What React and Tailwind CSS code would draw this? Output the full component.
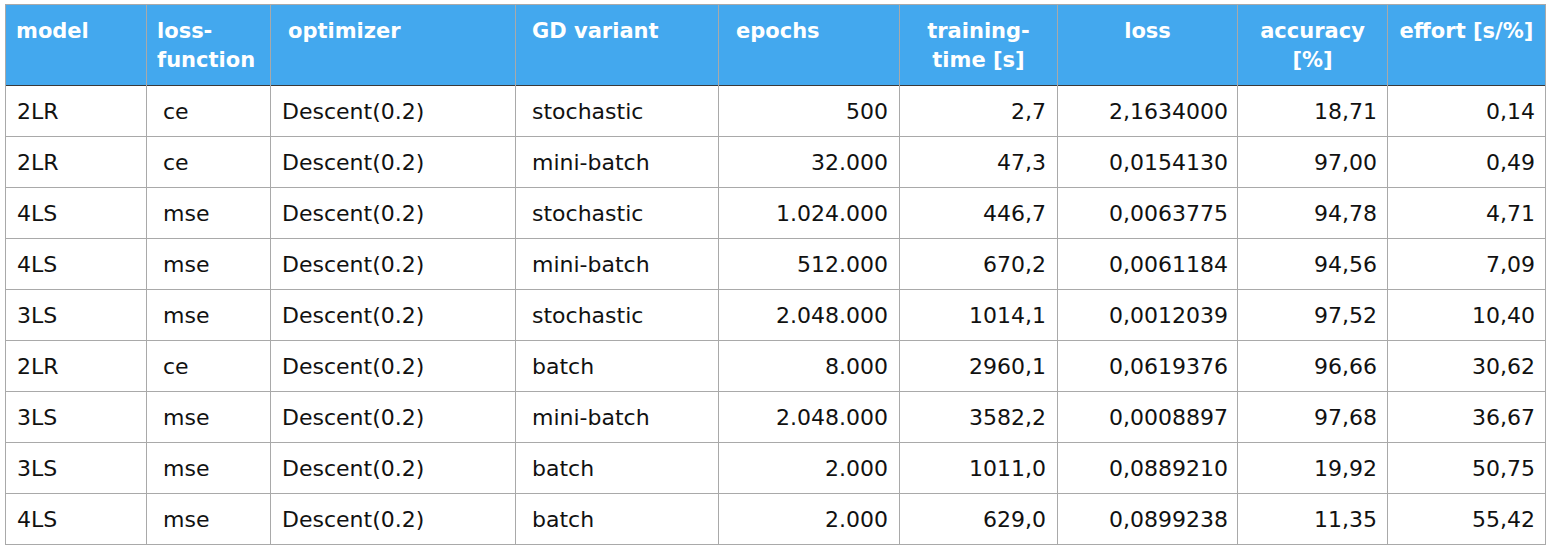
import React from "react";

const COLS = [
  { label: ["model"], w: 141, head: "text-left pl-[10px]", body: "text-left pl-[11px]" },
  { label: ["loss-", "function"], w: 124, head: "text-left pl-[10px]", body: "text-left pl-[16px]" },
  { label: ["optimizer"], w: 245, head: "text-left pl-[17px]", body: "text-left pl-[11px]" },
  { label: ["GD variant"], w: 203, head: "text-left pl-[16px]", body: "text-left pl-[16px]" },
  { label: ["epochs"], w: 181, head: "text-left pl-[17px]", body: "text-right pr-[11px]" },
  { label: ["training-", "time [s]"], w: 158, head: "text-center", body: "text-right pr-[11px]" },
  { label: ["loss"], w: 180, head: "text-center", body: "text-right pr-[9px]" },
  { label: ["accuracy", "[%]"], w: 150, head: "text-center", body: "text-right pr-[10px]" },
  { label: ["effort [s/%]"], w: 158, head: "text-center", body: "text-right pr-[10px]" },
];

const ROWS = [
  ["2LR", "ce", "Descent(0.2)", "stochastic", "500", "2,7", "2,1634000", "18,71", "0,14"],
  ["2LR", "ce", "Descent(0.2)", "mini-batch", "32.000", "47,3", "0,0154130", "97,00", "0,49"],
  ["4LS", "mse", "Descent(0.2)", "stochastic", "1.024.000", "446,7", "0,0063775", "94,78", "4,71"],
  ["4LS", "mse", "Descent(0.2)", "mini-batch", "512.000", "670,2", "0,0061184", "94,56", "7,09"],
  ["3LS", "mse", "Descent(0.2)", "stochastic", "2.048.000", "1014,1", "0,0012039", "97,52", "10,40"],
  ["2LR", "ce", "Descent(0.2)", "batch", "8.000", "2960,1", "0,0619376", "96,66", "30,62"],
  ["3LS", "mse", "Descent(0.2)", "mini-batch", "2.048.000", "3582,2", "0,0008897", "97,68", "36,67"],
  ["3LS", "mse", "Descent(0.2)", "batch", "2.000", "1011,0", "0,0889210", "19,92", "50,75"],
  ["4LS", "mse", "Descent(0.2)", "batch", "2.000", "629,0", "0,0899238", "11,35", "55,42"],
];

export default function App() {
  return (
    <div className="w-[1562px] h-[556px] bg-white pt-[4px] pl-[5px] font-['DejaVu_Sans',sans-serif]">
      <table className="table-fixed border-collapse w-[1540px] border border-[#a9a9a9]">
        <colgroup>
          {COLS.map((c, i) => (
            <col key={i} style={{ width: c.w }} />
          ))}
        </colgroup>
        <thead>
          <tr className="bg-[#43a8ee] h-[81px] border-b border-b-[#3a3a3a]">
            {COLS.map((c, i) => (
              <th
                key={i}
                className={`align-top pt-[12px] text-white font-bold text-[21px] leading-[29px] border-x border-[#a9a9a9] ${c.head}`}
              >
                {c.label.map((l, j) => (
                  <div key={j}>{l}</div>
                ))}
              </th>
            ))}
          </tr>
        </thead>
        <tbody>
          {ROWS.map((r, i) => (
            <tr key={i} className="h-[51px] border-t border-[#a9a9a9]">
              {r.map((v, j) => (
                <td
                  key={j}
                  className={`align-middle text-[22px] text-[#111] border-x border-[#a9a9a9] ${COLS[j].body}`}
                >
                  {v}
                </td>
              ))}
            </tr>
          ))}
        </tbody>
      </table>
    </div>
  );
}
